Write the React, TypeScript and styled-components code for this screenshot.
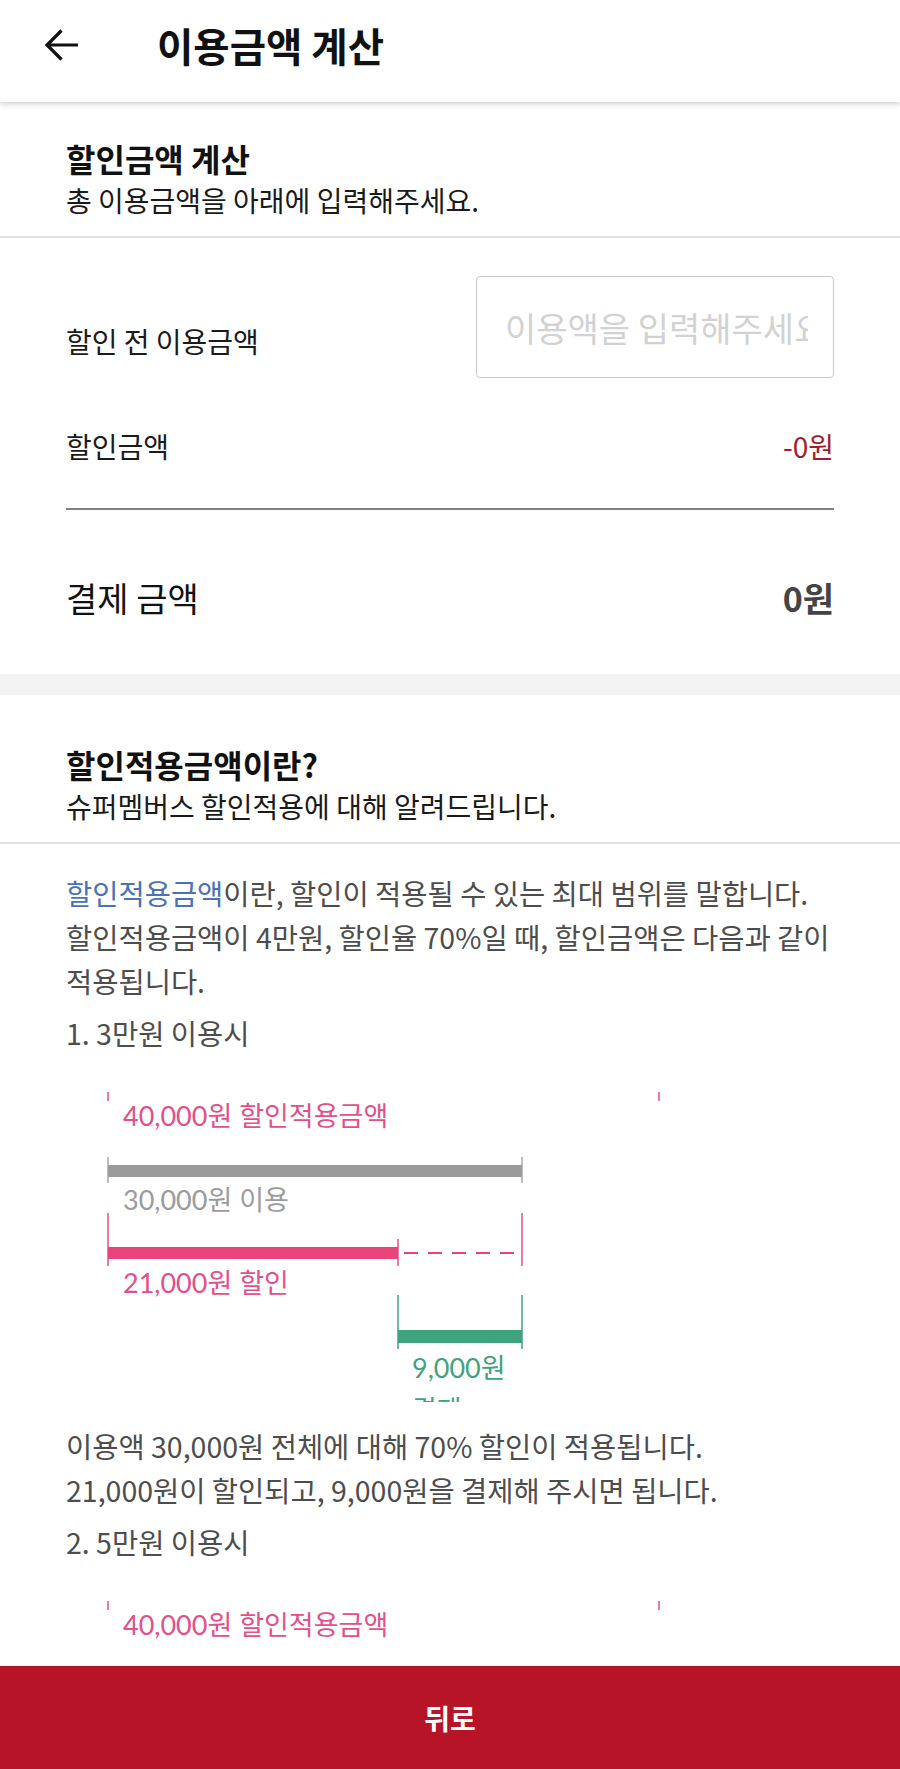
import React from "react";
import styled, { createGlobalStyle } from "styled-components";

const GlobalStyle = createGlobalStyle`
  html, body {
    margin: 0;
    padding: 0;
    background: #ffffff;
  }
  body {
    font-family: "Noto Sans CJK KR", "Noto Sans", sans-serif;
    color: #111;
  }
  *, *::before, *::after {
    box-sizing: border-box;
  }
`;

const Screen = styled.div`
  height: 100vh;
  display: flex;
  flex-direction: column;
  overflow: hidden;
  background: #fff;
`;

const Header = styled.header`
  position: relative;
  z-index: 2;
  flex: none;
  height: 102px;
  display: flex;
  align-items: center;
  padding: 0 0 12px 42px;
  background: #fff;
  box-shadow: 0 2px 6px rgba(0, 0, 0, 0.2);
`;

const BackButton = styled.button`
  width: 40px;
  height: 40px;
  padding: 0;
  border: 0;
  background: none;
  display: flex;
  align-items: center;
  justify-content: center;
  margin-right: 75px;
  cursor: pointer;
`;

const HeaderTitle = styled.h1`
  margin: 0;
  font-size: 39.5px;
  font-weight: 700;
  line-height: 50px;
  color: #111;
`;

const Main = styled.main`
  flex: 1;
  overflow: hidden;
  background: #fff;
`;

const SectionHead = styled.div<{ $top: number }>`
  padding: ${(p) => p.$top}px 66px 15px;
  border-bottom: 2px solid #e3e3e3;
`;

const SectionTitle = styled.h2`
  margin: 0;
  font-size: 32px;
  font-weight: 700;
  line-height: 42px;
  color: #111;
`;

const SectionDesc = styled.p`
  margin: 0;
  font-size: 28px;
  line-height: 42px;
  color: #1a1a1a;
  word-break: keep-all;
`;

const Calculator = styled.div`
  padding: 38px 66px 54px;
`;

const InputRow = styled.div`
  display: flex;
  justify-content: space-between;
  align-items: center;
`;

const FieldLabel = styled.span<{ $offset?: number }>`
  margin-top: ${(p) => p.$offset ?? 0}px;
  font-size: 28px;
  line-height: 40px;
  color: #1a1a1a;
`;

const AmountInput = styled.input`
  width: 358px;
  height: 102px;
  padding: 0 25px 0 28px;
  border: 1.5px solid #c9c9c9;
  border-radius: 4px;
  font-family: "Noto Sans CJK KR", "Noto Sans", sans-serif;
  font-size: 34px;
  color: #222;
  background: #fff;
  outline: none;
  &::placeholder {
    color: #d2d2d2;
  }
`;

const DiscountRow = styled.div`
  margin-top: 48px;
  padding-bottom: 42px;
  border-bottom: 2px solid #808080;
  display: flex;
  justify-content: space-between;
  align-items: center;
`;

const DiscountValue = styled.span`
  font-size: 28px;
  line-height: 40px;
  color: #a31b2e;
`;

const TotalRow = styled.div`
  margin-top: 66px;
  display: flex;
  justify-content: space-between;
  align-items: center;
`;

const TotalLabel = styled.span`
  font-size: 34px;
  line-height: 44px;
  color: #111;
`;

const TotalValue = styled.span`
  font-size: 34px;
  font-weight: 700;
  line-height: 44px;
  color: #444;
`;

const SectionGap = styled.div`
  height: 21px;
  background: #f3f3f3;
`;

const Article = styled.div`
  padding: 27px 52px 0 66px;
`;

const Paragraph = styled.p`
  margin: 0 0 8px;
  font-size: 28.5px;
  line-height: 44px;
  color: #4d4d4d;
  word-break: keep-all;
`;

const Highlight = styled.span`
  color: #4a72b4;
`;

const ChartFrame = styled.div`
  margin: 19px 0 22px;
  height: 328px;
  overflow: hidden;
  background: #fff;
`;

const ChartSvg = styled.svg`
  display: block;
  font-family: Lato, "Noto Sans CJK KR", sans-serif;
  font-size: 27px;
`;

const BottomButton = styled.button`
  flex: none;
  height: 103px;
  border: 0;
  background: #b81428;
  color: #fff;
  font-family: "Noto Sans CJK KR", "Noto Sans", sans-serif;
  font-size: 28px;
  font-weight: 700;
  display: flex;
  align-items: center;
  justify-content: center;
  cursor: pointer;
`;

const PINK = "#e2508a";
const PINK_BAR = "#e8437a";
const GRAY = "#9b9b9b";
const GREEN = "#3fa37e";

const ArrowBack = () => (
  <svg width="36" height="36" viewBox="0 0 36 36" fill="none">
    <path
      d="M34 18H3M17.5 3.5L3 18l14.5 14.5"
      stroke="#111"
      strokeWidth="3.2"
      strokeLinecap="butt"
      strokeLinejoin="miter"
    />
  </svg>
);

const DiscountChart = () => (
  <ChartSvg width="768" height="360" viewBox="0 0 768 360">
    <g strokeWidth="1.5">
      <line x1="42" y1="18" x2="42" y2="27" stroke={PINK} />
      <line x1="593" y1="18" x2="593" y2="27" stroke={PINK} />
    </g>
    <text x="57" y="52" fill={PINK}>
      40,000원 할인적용금액
    </text>

    <g stroke="#a8a8a8" strokeWidth="1.5">
      <line x1="42" y1="83" x2="42" y2="109" />
      <line x1="456" y1="83" x2="456" y2="109" />
    </g>
    <rect x="42" y="91" width="414" height="12" fill={GRAY} />
    <text x="57" y="136" fill={GRAY}>
      30,000원 이용
    </text>

    <g stroke={PINK} strokeWidth="1.5">
      <line x1="42" y1="139" x2="42" y2="192" />
      <line x1="456" y1="139" x2="456" y2="192" />
      <line x1="332" y1="165" x2="332" y2="192" />
    </g>
    <rect x="42" y="173" width="290" height="12" fill={PINK_BAR} />
    <line
      x1="338"
      y1="179"
      x2="456"
      y2="179"
      stroke={PINK_BAR}
      strokeWidth="2"
      strokeDasharray="14 10"
    />
    <text x="57" y="219" fill={PINK}>
      21,000원 할인
    </text>

    <g stroke={GREEN} strokeWidth="1.5">
      <line x1="332" y1="221" x2="332" y2="275" />
      <line x1="456" y1="221" x2="456" y2="275" />
    </g>
    <rect x="332" y="256" width="124" height="13" fill={GREEN} />
    <text x="346" y="304" fill={GREEN}>
      9,000원
    </text>
    <text x="346" y="346" fill={GREEN}>
      결제
    </text>
  </ChartSvg>
);

export default function App() {
  return (
    <>
      <GlobalStyle />
      <Screen>
        <Header>
          <BackButton aria-label="뒤로가기">
            <ArrowBack />
          </BackButton>
          <HeaderTitle>이용금액 계산</HeaderTitle>
        </Header>
        <Main>
          <SectionHead $top={35}>
            <SectionTitle>할인금액 계산</SectionTitle>
            <SectionDesc>총 이용금액을 아래에 입력해주세요.</SectionDesc>
          </SectionHead>
          <Calculator>
            <InputRow>
              <FieldLabel $offset={28}>할인 전 이용금액</FieldLabel>
              <AmountInput type="text" placeholder="이용액을 입력해주세요" />
            </InputRow>
            <DiscountRow>
              <FieldLabel>할인금액</FieldLabel>
              <DiscountValue>-0원</DiscountValue>
            </DiscountRow>
            <TotalRow>
              <TotalLabel>결제 금액</TotalLabel>
              <TotalValue>0원</TotalValue>
            </TotalRow>
          </Calculator>
          <SectionGap />
          <SectionHead $top={48}>
            <SectionTitle>할인적용금액이란?</SectionTitle>
            <SectionDesc>슈퍼멤버스 할인적용에 대해 알려드립니다.</SectionDesc>
          </SectionHead>
          <Article>
            <Paragraph>
              <Highlight>할인적용금액</Highlight>이란, 할인이 적용될 수 있는 최대
              범위를 말합니다. 할인적용금액이 4만원, 할인율 70%일 때, 할인금액은
              다음과 같이 적용됩니다.
            </Paragraph>
            <Paragraph>1. 3만원 이용시</Paragraph>
            <ChartFrame>
              <DiscountChart />
            </ChartFrame>
            <Paragraph>
              이용액 30,000원 전체에 대해 70% 할인이 적용됩니다.
              <br />
              21,000원이 할인되고, 9,000원을 결제해 주시면 됩니다.
            </Paragraph>
            <Paragraph>2. 5만원 이용시</Paragraph>
            <ChartFrame>
              <DiscountChart />
            </ChartFrame>
          </Article>
        </Main>
        <BottomButton>뒤로</BottomButton>
      </Screen>
    </>
  );
}
